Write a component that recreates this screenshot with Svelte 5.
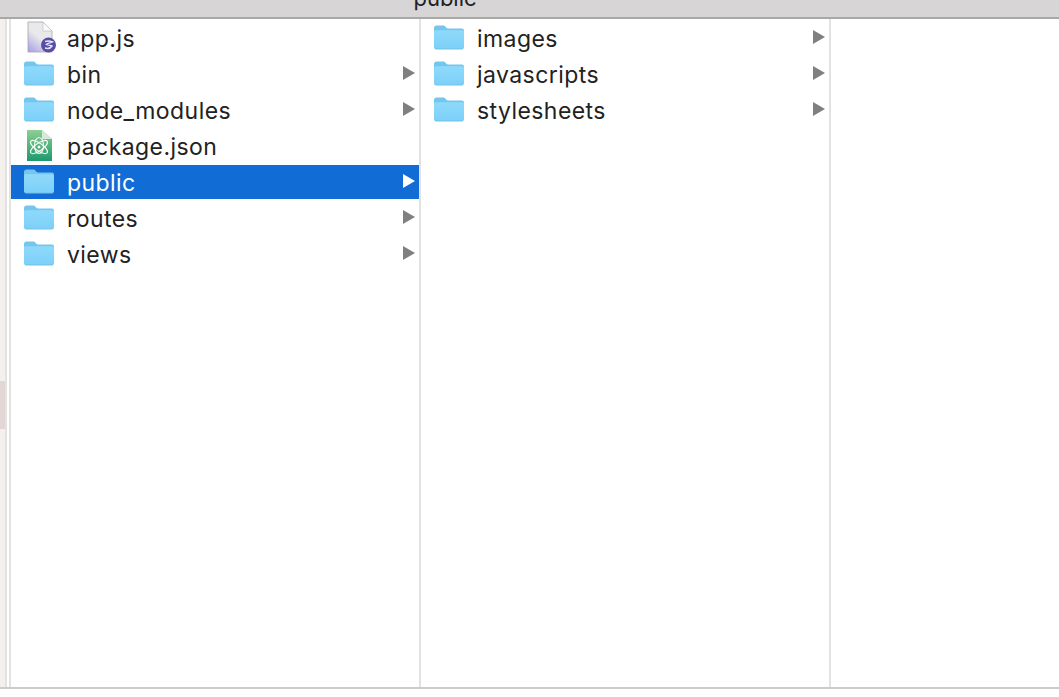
<script>
  const col1 = [
    { name: 'app.js', icon: 'js' },
    { name: 'bin', icon: 'folder', arrow: true },
    { name: 'node_modules', icon: 'folder', arrow: true },
    { name: 'package.json', icon: 'atom' },
    { name: 'public', icon: 'folder', arrow: true, selected: true },
    { name: 'routes', icon: 'folder', arrow: true },
    { name: 'views', icon: 'folder', arrow: true }
  ];
  const col2 = [
    { name: 'images', icon: 'folder', arrow: true },
    { name: 'javascripts', icon: 'folder', arrow: true },
    { name: 'stylesheets', icon: 'folder', arrow: true }
  ];
  const columns = [col1, col2];
</script>

<div class="window">
  <div class="titlebar"><span class="title">public</span></div>
  <div class="body">
    <div class="gutter"><div class="thumb"></div></div>
    <div class="browser">
      {#each columns as items}
        <div class="column">
          {#each items as item}
            <div class="row" class:selected={item.selected}>
              <span class="icon">
                {#if item.icon === 'folder'}
                  <svg class="folder" width="32" height="26" viewBox="0 0 32 26">
                    <defs>
                      <linearGradient id="front" x1="0" y1="0" x2="0" y2="1">
                        <stop offset="0" stop-color="#8fdafb"/>
                        <stop offset="1" stop-color="#7dd0f8"/>
                      </linearGradient>
                    </defs>
                    <path d="M1 4C1 2.500 2 1.500 3.500 1.500H10C11.500 1.500 12 2 13 3.200C13.800 4.200 14.500 4.500 16 4.500H29C30.500 4.500 31 5.500 31 7V23C31 24.500 30 25.500 29 25.500H3C2 25.500 1 24.500 1 23Z" fill="#74c6ee"/>
                    <path d="M1 8C1 6.800 2 6.200 3 6.200H29C30 6.200 31 6.800 31 8V22.500C31 23.500 30 24.200 29 24.200H3C2 24.200 1 23.500 1 22.500Z" fill="url(#front)"/>
                  </svg>
                {:else if item.icon === 'js'}
                  <svg width="34" height="34" viewBox="0 0 34 34">
                    <defs>
                      <linearGradient id="paper" x1="0.600" y1="0.200" x2="0.100" y2="1">
                        <stop offset="0.350" stop-color="#e9e9eb"/>
                        <stop offset="1" stop-color="#aaa2e8"/>
                      </linearGradient>
                    </defs>
                    <path d="M5 1H20L29 10V31H5Z" fill="url(#paper)" stroke="#a4a4a8" stroke-width="0.800"/>
                    <path d="M20 1V10H29Z" fill="#fafafa" stroke="#b8b8b8" stroke-width="0.600"/>
                    <circle cx="25.500" cy="24" r="7.500" fill="#574ea5"/>
                    <path d="M22 20.500C24 19.800 27 19.800 29.500 20.800C27.500 21.800 25 22.300 23.500 23.300C25 24.300 27.500 24.300 29 25C27.500 27.300 24.500 27.800 22 27" fill="none" stroke="#e8e6f6" stroke-width="1.400"/>
                  </svg>
                {:else}
                  <svg width="32" height="34" viewBox="0 0 32 34">
                    <defs>
                      <linearGradient id="mint" x1="0" y1="0" x2="0" y2="1">
                        <stop offset="0" stop-color="#8dcf92"/>
                        <stop offset="1" stop-color="#1c9a6c"/>
                      </linearGradient>
                    </defs>
                    <path d="M4 1H19L29 10V32H4Z" fill="url(#mint)"/>
                    <path d="M19 1V10H29Z" fill="#d8e8da"/>
                    <g fill="none" stroke="#f2f8f2" stroke-width="1.200">
                      <ellipse cx="16" cy="18" rx="10" ry="3.800" transform="rotate(35 16 18)"/>
                      <ellipse cx="16" cy="18" rx="10" ry="3.800" transform="rotate(-35 16 18)"/>
                      <ellipse cx="16" cy="16.500" rx="4.500" ry="8"/>
                    </g>
                    <circle cx="16" cy="18" r="1.500" fill="#f2f8f2"/>
                  </svg>
                {/if}
              </span>
              <span class="name">{item.name}</span>
              {#if item.arrow}<span class="arrow"></span>{/if}
            </div>
          {/each}
        </div>
      {/each}
      <div class="column last"></div>
    </div>
  </div>
  <div class="footer"></div>
</div>

<style>
  :global(body) {
    margin: 0;
    background: #fff;
  }
  .window {
    width: 1059px;
    height: 697px;
    display: flex;
    flex-direction: column;
    overflow: hidden;
    font-family: Inter, "Liberation Sans", sans-serif;
    color: #222;
  }
  .titlebar {
    height: 17px;
    flex: none;
    background: #d8d5d6;
    border-bottom: 2px solid #a9a7a8;
    display: flex;
    justify-content: center;
    overflow: hidden;
  }
  .title {
    font-size: 22px;
    line-height: 22px;
    margin-top: -13px;
    margin-left: -169px;
    color: #222;
  }
  .body {
    flex: 1;
    display: flex;
    min-height: 0;
  }
  .gutter {
    width: 5px;
    flex: none;
    background: #f3f0ee;
    border-right: 2px solid #e3e1e1;
    padding-top: 362px;
  }
  .thumb {
    height: 48px;
    background: #e2d7d5;
  }
  .browser {
    flex: 1;
    display: flex;
    margin-left: 2px;
    border-left: 2px solid #e2e2e2;
  }
  .column {
    width: 408px;
    flex: none;
    border-right: 2px solid #e2e2e2;
    padding-top: 2px;
    display: flex;
    flex-direction: column;
    gap: 2px;
  }
  .column.last {
    flex: 1;
    border-right: 0;
  }
  .row {
    height: 34px;
    display: flex;
    align-items: center;
    position: relative;
    font-size: 23px;
  }
  .row.selected {
    background: #116cd6;
    color: #fff;
  }
  .icon {
    width: 56px;
    flex: none;
    display: flex;
    justify-content: flex-start;
    padding-left: 12px;
    box-sizing: border-box;
  }
  .folder {
    margin-bottom: 2px;
  }
  .name {
    letter-spacing: 0.43px;
    line-height: 34px;
    position: relative;
    top: 1px;
  }
  .arrow {
    position: absolute;
    right: 4px;
    top: 9px;
    border-left: 12px solid #808080;
    border-top: 7px solid transparent;
    border-bottom: 7px solid transparent;
  }
  .selected .arrow {
    border-left-color: #fff;
  }
  .footer {
    height: 8px;
    flex: none;
    border-top: 2px solid #cbcbcb;
    background: #fff;
  }
</style>
